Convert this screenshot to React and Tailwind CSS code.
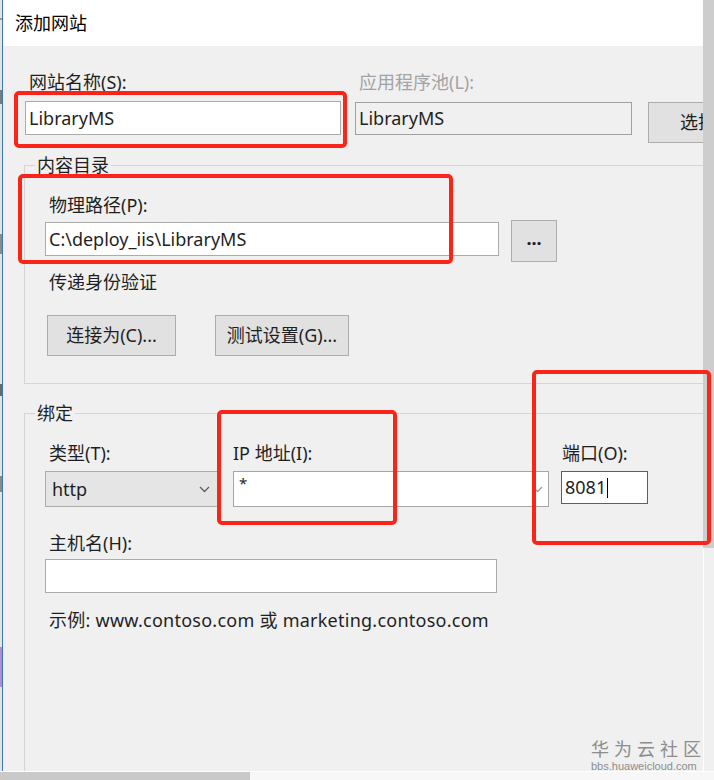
import React from 'react'

function RedBox({ className }) {
  return (
    <div
      className={`pointer-events-none absolute rounded-[5px] border-[4px] border-[#fa2418] ${className}`}
    />
  )
}

function Chevron({ color = '#5f5f5f' }) {
  return (
    <svg width="11" height="7" viewBox="0 0 11 7" fill="none">
      <path d="M1 1l4.5 4.5L10 1" stroke={color} strokeWidth="1.3" />
    </svg>
  )
}

function TextBox({ value, className = '' }) {
  return (
    <div className={`flex h-[34px] shrink-0 items-center border border-[#ababab] bg-white pl-[3px] ${className}`}>
      {value}
    </div>
  )
}

function Button({ children, className = '' }) {
  return (
    <div
      className={`flex shrink-0 items-center justify-center border border-[#adadad] bg-[#e1e1e1] ${className}`}
    >
      {children}
    </div>
  )
}

function Label({ children, className = '' }) {
  return <div className={`h-[24px] whitespace-nowrap leading-[24px] ${className}`}>{children}</div>
}

function GroupBox({ title, children, className = '' }) {
  return (
    <fieldset className={`w-[760px] min-w-[760px] border border-[#d5d5d5] ${className}`}>
      <legend className="ml-[10px] px-[2px] leading-[24px]">{title}</legend>
      {children}
    </fieldset>
  )
}

function LeftEdge() {
  return (
    <div className="flex w-[3px] shrink-0 border-r border-[#3b78b4]">
      <div className="flex w-[2px] flex-col bg-[#e4e4e4]">
        <div className="h-[18px]" />
        <div className="h-[2px] bg-[#9a9a9a]" />
        <div className="h-[70px]" />
        <div className="h-[14px] bg-[#7a7a7a]" />
        <div className="h-[130px]" />
        <div className="h-[20px] bg-[#8a8a8a]" />
        <div className="h-[130px]" />
        <div className="h-[12px] bg-[#6a6a6a]" />
        <div className="h-[80px]" />
        <div className="h-[16px] bg-[#8a8a8a]" />
        <div className="h-[155px]" />
        <div className="h-[40px] bg-[#b48ad8]" />
      </div>
    </div>
  )
}

function RightEdge() {
  return (
    <div className="flex w-[11px] shrink-0 flex-col">
      <div className="h-[548px] bg-[#cdcdcd]" />
      <div className="flex-1 border-l border-white bg-[#f0f0f0]" />
    </div>
  )
}

export default function App() {
  return (
    <div className="relative flex h-[780px] w-[714px] flex-col overflow-hidden bg-[#f0f0f0] font-['Noto_Sans','Noto_Sans_CJK_SC',sans-serif] text-[18px] text-[#1f1f1f]">
      <div className="flex h-[771px]">
        <LeftEdge />

        <div className="flex w-[700px] shrink-0 flex-col overflow-hidden">
          <div className="flex h-[46px] shrink-0 items-center bg-white pl-[12px] text-black">
            添加网站
          </div>

          <div className="flex-1 pl-[21px]">
            {/* site name / app pool */}
            <div className="mt-[24px] flex">
              <div className="ml-[1px] w-[316px] shrink-0">
                <Label className="pl-[4px]">网站名称(S):</Label>
                <TextBox value="LibraryMS" className="mt-[7px]" />
              </div>
              <div className="ml-[14px] w-[277px] shrink-0">
                <Label className="pl-[4px] text-[#a3a3a3]">应用程序池(L):</Label>
                <div className="mt-[8px] flex h-[33px] items-center border border-[#a0a0a0] bg-[#f0f0f0] pl-[3px]">
                  LibraryMS
                </div>
              </div>
              <div className="ml-[16px] shrink-0 pt-[32px]">
                <Button className="h-[41px] w-[100px] !justify-start whitespace-nowrap pl-[31px]">
                  选择(E)...
                </Button>
              </div>
            </div>

            {/* content directory */}
            <GroupBox title="内容目录" className="mt-[10px]">
              <div className="pb-[27px] pl-[20px] pt-[16px]">
                <Label className="pl-[4px]">物理路径(P):</Label>
                <div className="mt-[3px] flex items-start">
                  <TextBox value="C:\deploy_iis\LibraryMS" className="mt-[2px] w-[454px]" />
                  <Button className="ml-[12px] h-[42px] w-[46px] pb-[6px] font-bold leading-none">
                    ...
                  </Button>
                </div>
                <Label className="mt-[8px] pl-[4px]">传递身份验证</Label>
                <div className="mt-[21px] flex">
                  <Button className="ml-[2px] h-[41px] w-[129px]">连接为(C)...</Button>
                  <Button className="ml-[39px] h-[41px] w-[134px]">测试设置(G)...</Button>
                </div>
              </div>
            </GroupBox>

            {/* binding */}
            <GroupBox title="绑定" className="mt-[17px] h-[420px]">
              <div className="pl-[20px] pt-[16px]">
                <div className="flex items-start">
                  <div className="w-[173px] shrink-0">
                    <Label className="pl-[4px]">类型(T):</Label>
                    <div className="mt-[6px] flex h-[36px] items-center justify-between border border-[#acacac] bg-[#e5e5e5] pl-[6px] pr-[7px]">
                      <span>http</span>
                      <Chevron />
                    </div>
                  </div>
                  <div className="ml-[15px] w-[316px] shrink-0">
                    <Label>IP 地址(I):</Label>
                    <div className="mt-[6px] flex h-[36px] justify-between border border-[#a6a6a6] bg-white pl-[5px] pr-[5px]">
                      <span className="pt-[1px] text-[15px] leading-[20px]">*</span>
                      <div className="self-center">
                        <Chevron color="#9a9a9a" />
                      </div>
                    </div>
                  </div>
                  <div className="ml-[12px] w-[87px] shrink-0">
                    <Label className="pl-[1px]">端口(O):</Label>
                    <div className="mt-[6px] flex h-[33px] items-center border border-[#0078d7] bg-white pl-[3px]">
                      <span>8081</span>
                      <span className="ml-[1px] inline-block h-[20px] w-[1px] bg-black" />
                    </div>
                  </div>
                </div>

                <Label className="mt-[24px] pl-[4px]">主机名(H):</Label>
                <TextBox value="" className="mt-[4px] w-[452px]" />

                <Label className="mt-[15px] pl-[4px] tracking-[0.25px]">
                  示例: www.contoso.com 或 marketing.contoso.com
                </Label>
              </div>
            </GroupBox>
          </div>
        </div>

        <RightEdge />
      </div>

      {/* bottom strip */}
      <div className="flex h-[9px] border-t border-white">
        <div className="w-[250px] bg-[#c9c9c9]" />
        <div className="flex-1 bg-[#f7f7f7]" />
      </div>

      {/* annotation boxes */}
      <RedBox className="left-[14px] top-[91px] h-[57px] w-[333px]" />
      <RedBox className="left-[18px] top-[174px] h-[90px] w-[435px]" />
      <RedBox className="left-[217px] top-[410px] h-[115px] w-[180px]" />
      <RedBox className="left-[532px] top-[370px] h-[175px] w-[179px]" />

      {/* watermark */}
      <div className="pointer-events-none absolute left-[591px] top-[738px] flex flex-col text-[#8d8d8d]">
        <div className="text-[18px] leading-[22px] tracking-[5px]">华为云社区</div>
        <div className="font-['Liberation_Sans',sans-serif] text-[11px] leading-[12px]">
          bbs.huaweicloud.com
        </div>
      </div>
    </div>
  )
}
